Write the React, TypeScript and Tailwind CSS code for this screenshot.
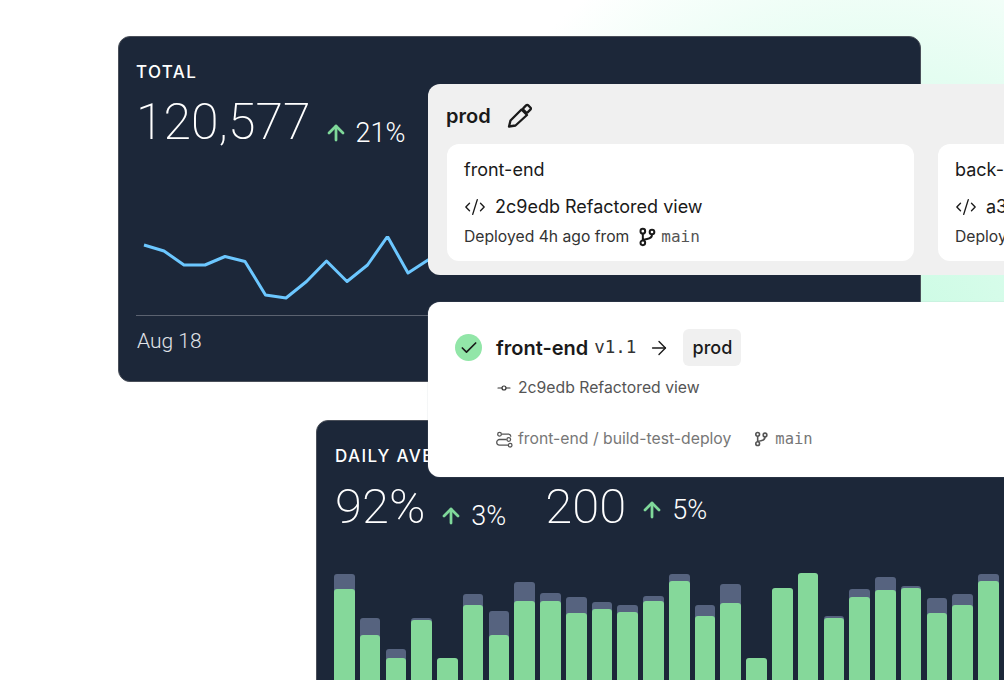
import React from "react";
import { ArrowRight, ArrowUp, Check, Code2, GitCommitHorizontal } from "lucide-react";

const LINE = "8,9 28,15 48,29 69,29 89,20.5 109,25.5 129.5,59 150,62 170.5,45.5 190.5,25 211,45.5 231.5,29 251.5,0.5 272,37 292,24 312,12 340,20";

// [gray top, green top] in page pixels, chart starts at 573
const BARS: [number, number][] = [
  [573, 589], [617, 635], [648, 658], [617, 620], [658, 658], [593, 605], [610, 635],
  [581, 601], [592, 601], [596, 613], [601, 609], [604, 612], [595, 601], [573, 581],
  [604, 616], [583, 603], [658, 658], [588, 588], [573, 573], [615, 618], [588, 597],
  [576, 590], [585, 588], [597, 613], [593, 605], [573, 581], [593, 606],
];

function BranchIcon({ size, className }: { size: number; className?: string }) {
  return (
    <svg width={size} height={size} viewBox="0 0 24 24" fill="none" stroke="currentColor" strokeWidth="2.4" className={className}>
      <circle cx="7" cy="5" r="2.8" />
      <circle cx="7" cy="19" r="2.8" />
      <circle cx="18" cy="6" r="2.8" />
      <path d="M7 8v8M18 9c0 4-3 5-6 5.5-3 .5-5 1-5 2" />
    </svg>
  );
}

function PencilIcon() {
  return (
    <svg width="26" height="26" viewBox="0 0 26 26" fill="none" stroke="currentColor" strokeWidth="2.3" strokeLinejoin="round">
      <path d="M3 23.5l1.5-6L15.5 6.5l5.5 5.5L9.5 22.5z" />
      <rect x="18" y="2.5" width="6" height="6.5" rx="1.5" transform="rotate(45 21 5.75)" />
    </svg>
  );
}

function PipelineIcon() {
  return (
    <svg width="17" height="17" viewBox="0 0 24 24" fill="none" stroke="currentColor" strokeWidth="1.8" className="mr-[5px] text-[#555]">
      <circle cx="5" cy="4.5" r="2.6" />
      <circle cx="18" cy="12" r="2.6" />
      <circle cx="20" cy="20" r="2.6" />
      <path d="M8 4.5h10a3.7 3.7 0 0 1 3 3.7M15 12H5a3.8 3.8 0 0 0 0 8h12" />
    </svg>
  );
}

function Delta({ value }: { value: string }) {
  return (
    <span className="flex items-center gap-[8px] font-['Roboto',sans-serif] text-[27px] font-light text-white">
      <ArrowUp size={24} strokeWidth={2.75} className="text-[#7fd89a]" />
      {value}
    </span>
  );
}

function ServiceCard({ name, commit }: { name: string; commit: string }) {
  return (
    <div className="h-[117px] w-[467px] shrink-0 rounded-xl bg-white pl-[17px] pt-[14px] text-[#1a1a1a]">
      <div className="text-[18px] leading-6">{name}</div>
      <div className="mt-[13px] flex items-center gap-[9px] text-[18px] leading-6 whitespace-nowrap">
        <Code2 size={22} strokeWidth={1.5} />
        {commit}
      </div>
      <div className="mt-[8px] flex items-center text-[15.7px] leading-5 text-[#333] whitespace-nowrap">
        Deployed 4h ago from
        <BranchIcon size={20} className="ml-[8px] mr-[4px] text-[#1a1a1a]" />
        <span className="font-['DejaVu_Sans_Mono',monospace] text-[16px] text-[#555]">main</span>
      </div>
    </div>
  );
}

export default function App() {
  return (
    <div className="relative h-[680px] w-[1004px] overflow-hidden bg-[radial-gradient(circle_at_880px_350px,#c8fbe2_0,#e4fdf1_280px,#ffffff_460px)] font-['Inter',sans-serif]">
      {/* total card */}
      <div className="absolute left-[118px] top-[36px] flex h-[346px] w-[803px] flex-col rounded-xl border border-[#4a4f59] bg-[#1c2739] pl-[17px] text-white">
        <div className="mt-[25px] text-[17px] font-medium leading-5 tracking-[0.08em]">TOTAL</div>
        <div className="mt-[9px] flex items-center">
          <span className="font-['Roboto',sans-serif] text-[50px] font-extralight leading-[58px]">120,577</span>
          <span className="ml-[13px] mt-[22px]"><Delta value="21%" /></span>
        </div>
        <svg width="340" height="64" viewBox="0 0 340 64" className="mt-[82px]" fill="none">
          <polyline points={LINE} stroke="#6cc7ff" strokeWidth="3" strokeLinejoin="round" />
        </svg>
        <div className="mt-[15px] h-px w-[765px] bg-[#5b6270]" />
        <div className="ml-px mt-[13px] font-['Roboto',sans-serif] text-[21px] font-light leading-6 text-[#e0e3e8]">Aug 18</div>
      </div>

      {/* daily average card */}
      <div className="absolute left-[316px] top-[420px] h-[300px] w-[720px] rounded-xl border border-[#4a4f59] bg-[#1c2739] pl-[17px] text-white">
        <div className="ml-px mt-[25px] text-[17px] font-medium leading-5 tracking-[0.08em]">DAILY AVERAGE</div>
        <div className="mt-[12px] flex items-center">
          <span className="ml-px font-['Roboto',sans-serif] text-[49px] font-extralight leading-[58px]">92%</span>
          <span className="ml-[14px] mt-[18px]"><Delta value="3%" /></span>
          <span className="ml-[39px] font-['Roboto',sans-serif] text-[49px] font-extralight leading-[58px]">200</span>
          <span className="ml-[14px] mt-[6px]"><Delta value="5%" /></span>
        </div>
        <div className="mt-[37px] flex items-start gap-[5.13px]">
          {BARS.map(([gray, green], i) => (
            <div key={i} className="relative h-[140px] w-[20.65px] shrink-0">
              <div className="absolute inset-x-0 bottom-0 rounded-t-[3px] bg-[#56637f]" style={{ top: gray - 573 }} />
              <div className="absolute inset-x-0 bottom-0 rounded-t-[3px] bg-[#85d89a]" style={{ top: green - 574 }} />
            </div>
          ))}
        </div>
      </div>

      {/* environment panel */}
      <div className="absolute left-[428px] top-[84px] h-[191px] w-[640px] rounded-l-xl bg-[#f0f0f0] pl-[19px]">
        <div className="flex h-[60px] items-center gap-[15px] pt-[3px] text-[#1a1a1a]">
          <span className="-ml-px text-[20px] font-semibold">prod</span>
          <PencilIcon />
        </div>
        <div className="flex gap-[24px]">
          <ServiceCard name="front-end" commit="2c9edb Refactored view" />
          <ServiceCard name="back-end" commit="a3f1c2 Updated API" />
        </div>
      </div>

      {/* deployment panel */}
      <div className="absolute left-[428px] top-[302px] h-[175px] w-[640px] rounded-l-xl bg-white pl-[27px] pt-[27px] shadow-[0_0_1px_#9ca3af]">
        <div className="flex items-center">
          <span className="flex h-[27px] w-[27px] items-center justify-center rounded-full bg-[#92e6a8] text-[#1a1a1a]">
            <Check size={20} strokeWidth={2} />
          </span>
          <span className="ml-[14px] text-[20px] font-semibold text-[#1a1a1a]">front-end</span>
          <span className="ml-[6px] font-['DejaVu_Sans_Mono',monospace] text-[17.5px] text-[#333]">v1.1</span>
          <ArrowRight size={22} strokeWidth={1.5} className="ml-[12px] text-[#1a1a1a]" />
          <span className="ml-[13px] flex h-[37px] w-[58px] items-center justify-center rounded-md bg-[#f0f0f0] text-[18px] font-[450] text-[#1a1a1a]">prod</span>
        </div>
        <div className="mt-[12px] flex items-center gap-[6px] pl-[41px] text-[15.75px] leading-5 text-[#555]">
          <GitCommitHorizontal size={16} strokeWidth={1.75} className="text-[#333]" />
          2c9edb Refactored view
        </div>
        <div className="mt-[31px] flex items-center pl-[41px] text-[15.75px] leading-5 text-[#777]">
          <PipelineIcon />
          front-end / build-test-deploy
          <BranchIcon size={16} className="ml-[22px] mr-[6px] text-[#555]" />
          <span className="font-['DejaVu_Sans_Mono',monospace] text-[15.5px]">main</span>
        </div>
      </div>
    </div>
  );
}
